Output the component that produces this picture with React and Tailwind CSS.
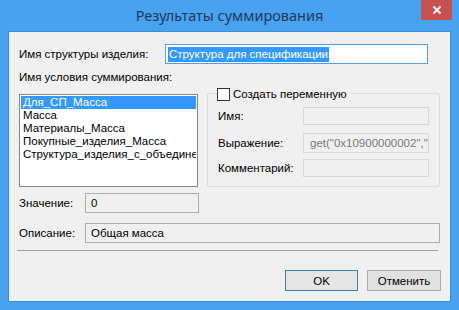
export default function App() {
  const items = [
    "Для_СП_Масса",
    "Масса",
    "Материалы_Масса",
    "Покупные_изделия_Масса",
    "Структура_изделия_с_объединением_Масса",
  ];
  return (
    <div
      className="w-[459px] h-[310px] bg-[#48a2f0] flex flex-col text-[11.5px] text-black"
      style={{ fontFamily: '"Liberation Sans", Arial, sans-serif' }}
    >
      <div className="relative h-[31px] flex items-center justify-center">
        <span className="text-[14.5px] text-[#1c3a5c] mt-[1px]" style={{ fontFamily: '"Noto Sans", sans-serif' }}>
          Результаты суммирования
        </span>
        <div className="absolute right-[7px] top-0 w-[31px] h-[20px] bg-[#c75050] flex items-center justify-center">
          <svg width="10" height="10" viewBox="0 0 10 10">
            <path d="M1.5 1.5 L8.5 8.5 M8.5 1.5 L1.5 8.5" stroke="white" strokeWidth="1.8" />
          </svg>
        </div>
      </div>
      <div className="mx-[8px] h-[271px] bg-[#f0f0f0] border border-[#3d8ed6] flex flex-col pl-[10px] pt-[12px] leading-[14px]">
        <div className="flex items-center h-[20px]">
          <div className="w-[146px]">Имя структуры изделия:</div>
          <div className="w-[263px] h-[20px] border border-[#569de5] bg-white flex items-center pl-[2px]">
            <span className="bg-[#3399ff] text-white px-[1px] leading-[15px]">Структура для спецификации</span>
          </div>
        </div>
        <div className="mt-[6px] h-[14px]">Имя условия суммирования:</div>
        <div className="flex mt-[9px] h-[94px]">
          <div className="w-[179px] h-[93px] mt-[1px] border border-[#828790] bg-white overflow-hidden pt-[1px] px-[1px]">
            {items.map((t, i) => (
              <div
                key={t}
                className={
                  "h-[13px] leading-[13px] pl-[2px] whitespace-nowrap overflow-hidden " +
                  (i === 0 ? "bg-[#3399ff] text-white" : "")
                }
              >
                {t}
              </div>
            ))}
          </div>
          <div className="relative ml-[9px] w-[233px] h-[94px] border border-[#dcdcdc] rounded-[2px] pl-[10px] pt-[13px]">
            <div className="absolute left-[9px] top-[-7px] flex items-center bg-[#f0f0f0] pr-[4px]">
              <div className="w-[13px] h-[13px] border border-[#333] bg-white" />
              <span className="ml-[3px]">Создать переменную</span>
            </div>
            <div className="flex items-center h-[18px]">
              <div className="w-[85px]">Имя:</div>
              <div className="w-[126px] h-[18px] border border-[#d9d9d9] bg-[#f0f0f0]" />
            </div>
            <div className="flex items-center h-[20px] mt-[8px]">
              <div className="w-[85px]">Выражение:</div>
              <div className="w-[126px] h-[20px] border border-[#d9d9d9] bg-[#f0f0f0] text-[#7a7a7a] pl-[6px] overflow-hidden whitespace-nowrap flex items-center">
                get("0x10900000002","/
              </div>
            </div>
            <div className="flex items-center h-[18px] mt-[6px]">
              <div className="w-[85px]">Комментарий:</div>
              <div className="w-[126px] h-[18px] border border-[#d9d9d9] bg-[#f0f0f0]" />
            </div>
          </div>
        </div>
        <div className="flex items-center h-[20px] mt-[6px]">
          <div className="w-[66px]">Значение:</div>
          <div className="w-[114px] h-[20px] border border-[#adadad] bg-[#f0f0f0] pl-[5px] flex items-center">0</div>
        </div>
        <div className="flex items-center h-[20px] mt-[10px]">
          <div className="w-[66px]">Описание:</div>
          <div className="w-[355px] h-[20px] border border-[#adadad] bg-[#f0f0f0] pl-[5px] flex items-center">Общая масса</div>
        </div>
        <div className="mt-[7px] ml-[-2px] w-[421px] h-px bg-[#a0a0a0]" />
        <div className="flex mt-[19px] ml-[266px] gap-[9px]">
          <div className="w-[73px] h-[21px] border border-[#3c7fb1] bg-[#e5e5e5] flex items-center justify-center">OK</div>
          <div className="w-[74px] h-[21px] border border-[#acacac] bg-[#e1e1e1] flex items-center justify-center">Отменить</div>
        </div>
      </div>
    </div>
  );
}
